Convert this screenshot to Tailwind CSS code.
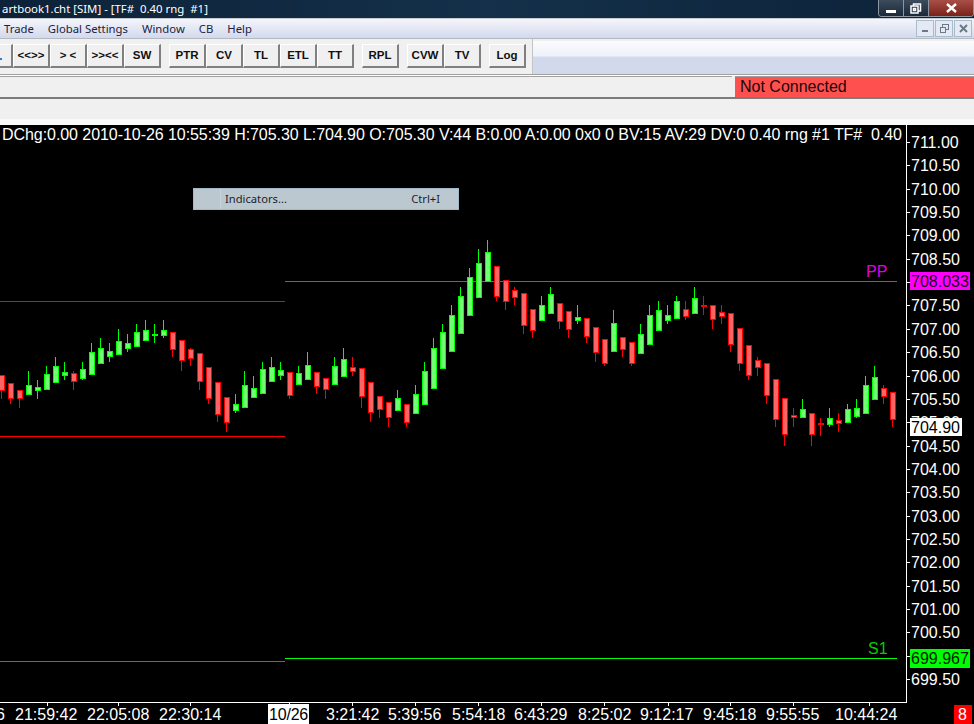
<!DOCTYPE html>
<html lang="en">
<head>
<meta charset="UTF-8" />
<title>Chartbook1.cht [SIM]</title>
<script src="https://cdn.jsdelivr.net/npm/@tailwindcss/browser@4"></script>
</head>
<body class="w-[974px] h-[724px] overflow-hidden bg-black font-['Liberation_Sans',sans-serif]">
<div class="relative flex flex-col w-[974px] h-[724px]">

    <!-- window title -->
    <div class="flex items-center justify-between h-[19px] shrink-0 bg-gradient-to-r from-[#0d2238] via-[#14304a] to-[#0c2238] border-b border-[#c8ccd0] text-white">
        <span class="pl-[2px] pb-[1px] text-[11.4px] leading-none whitespace-pre font-['Noto_Sans',sans-serif]">artbook1.cht [SIM] - [TF#  0.40 rng  #1]</span>
        <div class="flex h-[17px] mt-[-1px] border border-[#8c96a0] border-t-0 rounded-b-[4px] overflow-hidden">
            <div class="flex items-center justify-center w-[25px] bg-gradient-to-b from-[#3c4c5c] to-[#1a2a3a] border-r border-[#8c96a0]">
                <div class="w-[10px] h-[3px] mt-[6px] bg-white"></div>
            </div>
            <div class="flex items-center justify-center w-[25px] bg-gradient-to-b from-[#3c4c5c] to-[#1a2a3a] border-r border-[#8c96a0]">
                <svg width="12" height="11" viewBox="0 0 12 11" fill="none" stroke="#ffffff" stroke-width="1.5"><rect x="3.5" y="1" width="7" height="7" /><rect x="1" y="3" width="7" height="7" fill="#2a3a4a" /><rect x="3.5" y="5.5" width="2" height="2" /></svg>
            </div>
            <div class="flex items-center justify-center w-[44px] bg-gradient-to-b from-[#a85048] to-[#7a2018]">
                <svg width="11" height="10" viewBox="0 0 11 10" fill="none" stroke="#ffffff" stroke-width="2.4"><path d="M1 1 L10 9 M10 1 L1 9" /></svg>
            </div>
        </div>
    </div>

    <!-- menu bar -->
    <div class="flex items-center justify-between h-[20px] shrink-0 bg-gradient-to-b from-[#f4f6fb] to-[#d3d9ed] border-b border-[#b4b8c0] text-[#1c2140] text-[11.3px] font-['Noto_Sans',sans-serif]">
        <div class="flex pl-[4px] pt-[1px] gap-[14px]">
            <span>Trade</span>
            <span>Global Settings</span>
            <span>Window</span>
            <span>CB</span>
            <span>Help</span>
        </div>
        <div class="flex gap-[1px] pr-[2px]">
            <div class="flex items-center justify-center w-[18px] h-[17px] border border-[#a8bccc] bg-[#e4e9f4]"><div class="w-[6px] h-[2px] mt-[5px] bg-[#6c7a88]"></div></div>
            <div class="flex items-center justify-center w-[18px] h-[17px] border border-[#a8bccc] bg-[#e4e9f4]">
                <svg width="9" height="9" viewBox="0 0 9 9" fill="none" stroke="#6c7a88"><rect x="2.5" y="0.5" width="6" height="5" /><rect x="0.5" y="3.5" width="5" height="5" fill="#e4e9f4" /></svg>
            </div>
            <div class="flex items-center justify-center w-[18px] h-[17px] border border-[#a8bccc] bg-[#e4e9f4]">
                <svg width="9" height="9" viewBox="0 0 9 9" fill="none" stroke="#6c7a88" stroke-width="2"><path d="M1 1 L8 8 M8 1 L1 8" /></svg>
            </div>
        </div>
    </div>

    <!-- toolbar -->
    <div class="flex h-[36px] shrink-0 bg-[#f0f0f0] border-b border-[#a0a0a0]">
        <div class="relative flex items-center gap-[8px] w-[533px] pb-[1px] border-r border-[#c4c4c4] text-[11.5px] font-bold text-[#101010]">
            <div class="absolute left-0 top-[19px] w-[2px] h-[2px] bg-[#2a7ad0]"></div>
            <div class="flex ml-[-24px]">
                <button class="w-[37px] h-[24px] bg-[#f0f0f0] border border-white border-r-[#808080] border-b-[#808080] border-r-2 border-b-2"></button>
                <button class="w-[37px] h-[24px] bg-[#f0f0f0] border border-white border-r-[#808080] border-b-[#808080] border-r-2 border-b-2">&lt;&lt;&gt;&gt;</button>
                <button class="w-[37px] h-[24px] bg-[#f0f0f0] border border-white border-r-[#808080] border-b-[#808080] border-r-2 border-b-2">&gt; &lt;</button>
                <button class="w-[37px] h-[24px] bg-[#f0f0f0] border border-white border-r-[#808080] border-b-[#808080] border-r-2 border-b-2">&gt;&gt;&lt;&lt;</button>
                <button class="w-[37px] h-[24px] bg-[#f0f0f0] border border-white border-r-[#808080] border-b-[#808080] border-r-2 border-b-2">SW</button>
            </div>
            <div class="flex">
                <button class="w-[37px] h-[24px] bg-[#f0f0f0] border border-white border-r-[#808080] border-b-[#808080] border-r-2 border-b-2">PTR</button>
                <button class="w-[37px] h-[24px] bg-[#f0f0f0] border border-white border-r-[#808080] border-b-[#808080] border-r-2 border-b-2">CV</button>
                <button class="w-[37px] h-[24px] bg-[#f0f0f0] border border-white border-r-[#808080] border-b-[#808080] border-r-2 border-b-2">TL</button>
                <button class="w-[37px] h-[24px] bg-[#f0f0f0] border border-white border-r-[#808080] border-b-[#808080] border-r-2 border-b-2">ETL</button>
                <button class="w-[37px] h-[24px] bg-[#f0f0f0] border border-white border-r-[#808080] border-b-[#808080] border-r-2 border-b-2">TT</button>
            </div>
            <button class="w-[37px] h-[24px] bg-[#f0f0f0] border border-white border-r-[#808080] border-b-[#808080] border-r-2 border-b-2">RPL</button>
            <div class="flex">
                <button class="w-[37px] h-[24px] bg-[#f0f0f0] border border-white border-r-[#808080] border-b-[#808080] border-r-2 border-b-2">CVW</button>
                <button class="w-[37px] h-[24px] bg-[#f0f0f0] border border-white border-r-[#808080] border-b-[#808080] border-r-2 border-b-2">TV</button>
            </div>
            <button class="w-[37px] h-[24px] bg-[#f0f0f0] border border-white border-r-[#808080] border-b-[#808080] border-r-2 border-b-2">Log</button>
        </div>
        <div class="flex-1 mt-[2px] bg-gradient-to-b from-[#fbfcfe] from-0% via-[#eef1f9] via-45% to-[#d3d9ed] to-50%"></div>
    </div>

    <!-- status row -->
    <div class="flex h-[24px] shrink-0 bg-[#f0f0f0] border-t border-white border-b-2 border-b-[#7c7c7c]">
        <div class="flex-1 border-t border-[#a0a0a0]"></div>
        <div class="w-[239px] ml-[3px] pl-[5px] bg-[#ff5050] border-t border-[#a0a0a0] text-[16px] leading-[19px] text-[#180808]">Not Connected</div>
    </div>

    <!-- empty row above chart -->
    <div class="h-[26px] shrink-0 bg-[#f0f0f0] border-b-[6px] border-b-[#fafafa]"></div>

    <!-- chart -->
    <div class="relative flex-1">
        <svg id="chart" width="974" height="599" viewBox="0 125 974 599" class="block" shape-rendering="crispEdges" font-size="16" fill="#ffffff">
            <text x="2" y="140" class="tracking-[-0.06px]" xml:space="preserve">DChg:0.00 2010-10-26 10:55:39 H:705.30 L:704.90 O:705.30 V:44 B:0.00 A:0.00 0x0 0 BV:15 AV:29 DV:0 0.40 rng #1 TF#  0.40</text>
            <g id="levels">
                <rect x="0" y="301" width="285" height="1" fill="#ff0000" />
                <rect x="0" y="436" width="285" height="1" fill="#ff0000" />
                <rect x="0" y="661" width="285" height="1" fill="#ff00ff" />
                <rect x="285" y="281" width="612" height="1" fill="#ff00ff" />
                <rect x="285" y="658" width="612" height="1" fill="#00ff00" />
            </g>
            <g id="candles"></g>
            <g id="price-axis"></g>
            <g id="time-axis"></g>
            <rect x="906" y="125" width="1" height="578" fill="#ffffff" />
            <rect x="0" y="702" width="907" height="1" fill="#ffffff" />
            <text x="866" y="277" fill="#e000e0">PP</text>
            <text x="868" y="654" fill="#00d000">S1</text>
            <rect x="910" y="272" width="60" height="18" fill="#ff00ff" />
            <text x="911" y="287" fill="#200020">708.033</text>
            <rect x="910" y="649" width="60" height="19" fill="#00ff00" />
            <text x="911" y="664" fill="#002000">699.967</text>
            <rect x="910" y="418" width="52" height="18" fill="#ffffff" />
            <text x="911" y="433" fill="#000000">704.90</text>
            <rect x="268" y="704" width="41" height="20" fill="#ffffff" />
            <text x="269" y="720" fill="#000000" class="tracking-[-0.2px]">10/26</text>
            <rect x="954" y="705" width="18" height="19" fill="#ff0000" />
            <text x="958" y="720" fill="#ffffff">8</text>
        </svg>

        <!-- context menu -->
        <div class="absolute left-[193px] top-[63px] flex items-center w-[266px] h-[22px] bg-[#bcc8cf] border border-[#a2bac8] text-[11.2px] text-[#1c1c28] font-['Noto_Sans',sans-serif]">
            <div class="w-[27px] h-full border-r border-[#c8d2d8]"></div>
            <span class="pl-[4px]">Indicators...</span>
            <span class="ml-auto pr-[18px]">Ctrl+I</span>
        </div>
    </div>
</div>

<script>
    const SVG_NS = "http://www.w3.org/2000/svg";

    function addRect(parent, x, y, w, h, fill, stroke) {
        const r = document.createElementNS(SVG_NS, "rect");
        r.setAttribute("x", x);
        r.setAttribute("y", y);
        r.setAttribute("width", w);
        r.setAttribute("height", h);
        r.setAttribute("fill", fill);
        if (stroke) r.setAttribute("stroke", stroke);
        parent.appendChild(r);
    }

    function addText(parent, x, y, str) {
        const t = document.createElementNS(SVG_NS, "text");
        t.setAttribute("x", x);
        t.setAttribute("y", y);
        t.textContent = str;
        parent.appendChild(t);
    }

    // [color, wick top, body top, body bottom, wick bottom], one bar every 9px from x=1
    const bars = [
        "r 375 375 390 399","r 383 383 398 404","r 390 390 398 408","g 371 385 394 394","g 380 387 390 399",
        "g 366 374 389 389","g 357 366 382 382","g 362 372 375 380","r 371 373 381 390","g 362 369 378 380",
        "g 343 352 374 374","g 338 348 363 363","g 343 351 356 362","g 329 341 354 354","g 334 343 348 352",
        "g 324 332 346 346","g 320 330 340 340","g 324 334 335 343","g 320 330 335 338","r 332 332 349 357",
        "r 340 340 360 371","r 348 349 358 366","r 353 353 381 390","r 367 367 398 404","r 382 382 414 422",
        "r 397 397 422 432","g 394 404 410 413","g 371 385 407 407","g 376 388 397 397","g 362 369 393 393",
        "g 357 367 381 381","g 362 370 375 380","r 372 372 395 399","g 366 373 384 385","g 352 365 379 379",
        "r 372 372 386 394","r 378 378 389 399","g 357 366 384 384","g 348 359 376 376","r 357 367 371 376",
        "r 368 368 396 408","r 382 382 412 422","r 396 396 409 418","r 402 402 417 427","g 390 398 410 410",
        "r 404 404 422 427","g 385 394 413 413","g 362 371 404 404","g 338 348 388 388","g 324 332 368 368",
        "g 305 315 351 351","g 287 296 333 333","g 268 277 315 315","g 249 263 297 297","g 240 252 281 281",
        "r 266 266 296 301","r 280 280 301 310","r 287 290 297 305","r 293 293 325 334","r 309 309 330 338",
        "g 296 305 320 320","g 287 294 313 313","r 303 303 321 329","r 311 311 329 338","g 305 317 320 324",
        "r 318 318 336 343","r 327 327 352 362","r 339 339 363 366","g 310 323 351 351","r 337 337 349 357",
        "r 342 342 363 366","g 324 334 353 353","g 305 315 344 344","g 301 310 330 330","g 305 315 320 324",
        "g 296 301 318 318","r 301 309 316 320","g 287 298 313 313","r 296 305 305 315","r 305 305 319 329",
        "r 305 312 316 324","r 313 313 344 352","r 328 328 363 371","r 345 345 375 380","r 357 360 367 376",
        "r 363 363 395 404","r 379 379 419 427","r 398 398 434 446","r 408 415 417 427","g 399 409 417 418",
        "r 413 413 434 446","r 418 423 424 436","g 408 418 424 427","r 413 420 423 432","g 404 409 422 422",
        "g 399 408 416 418","g 376 385 413 413","g 366 377 399 399","r 385 388 396 404","r 392 392 419 427",
    ];

    const candles = document.getElementById("candles");
    bars.forEach((b, i) => {
        const [c, wt, top, bot, wb] = b.split(" ");
        const x = 1 + i * 9;
        const line = c === "g" ? "#00ff00" : "#ff0000";
        const body = c === "g" ? "#70ff70" : "#ff6464";
        addRect(candles, x, +wt, 1, wb - wt, line);
        addRect(candles, x - 2 + 0.5, +top + 0.5, 5, Math.max(bot - top, 1), body, line);
    });

    // price scale, 0.50 every 23.35px; 708.00 and 700.00 sit under the PP and S1 tags
    const priceAxis = document.getElementById("price-axis");
    for (let i = 0; i <= 23; i++) {
        const y = Math.round(142 + i * 23.35);
        const price = (711 - i * 0.5).toFixed(2);
        addRect(priceAxis, 907, y, 3, 1, "#ffffff");
        if (price !== "708.00" && price !== "700.00") addText(priceAxis, 911, y + 6, price);
    }

    // time scale
    const timeAxis = document.getElementById("time-axis");
    [[-4,"6",0],[15,"21:59:42",47],[87,"22:05:08",118],[159,"22:30:14",190],[326,"3:21:42",352],[388,"5:39:56",415],
     [452,"5:54:18",478],[514,"6:43:29",541],[578,"8:25:02",604],[640,"9:12:17",668],[703,"9:45:18",730],
     [766,"9:55:55",793],[835,"10:44:24",869]].forEach(([x, label, tick]) => {
        addText(timeAxis, x, 720, label);
        if (tick) addRect(timeAxis, tick, 703, 1, 3, "#ffffff");
    });
    addRect(timeAxis, 289, 703, 1, 3, "#ffffff");
</script>
</body>
</html>
